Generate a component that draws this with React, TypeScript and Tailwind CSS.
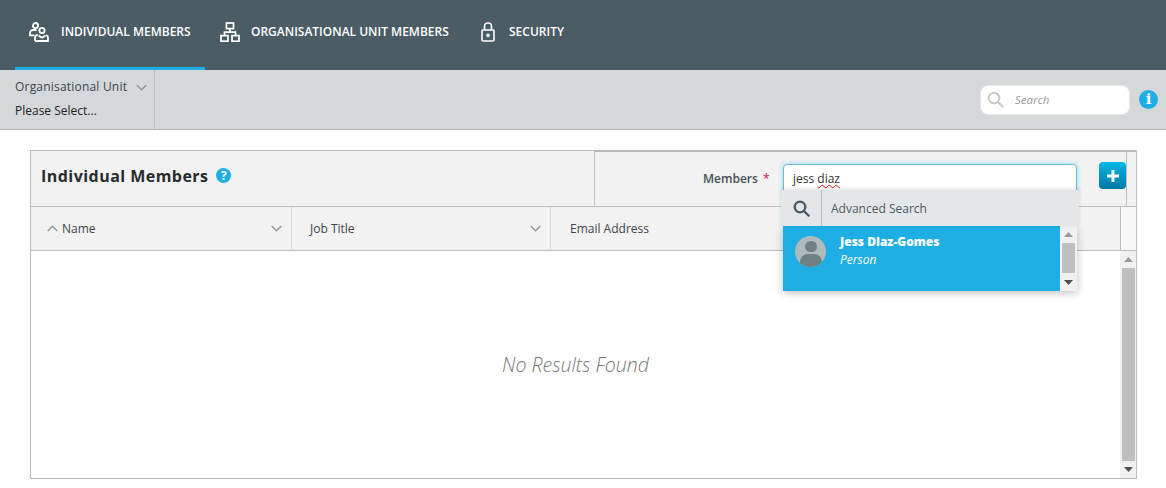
import React from "react";

const Chevron = ({ up = false, className = "" }: { up?: boolean; className?: string }) => (
  <svg width="11" height="7" viewBox="0 0 11 7" fill="none" stroke="#8d9599" strokeWidth="1.3" className={className}>
    <path d={up ? "M.7 6 5.5 1.2 10.3 6" : "M.7 1 5.5 5.8 10.3 1"} />
  </svg>
);

const MembersIcon = () => (
  <svg width="20" height="20" viewBox="0 0 20 20" fill="none" stroke="#fff" strokeWidth="1.8">
    <circle cx="6.5" cy="3.6" r="2.6" />
    <path d="M5.4 13.4H1v-2c0-2 1.4-3.4 3.2-3.4h3.4" />
    <circle cx="13" cy="8.4" r="2.6" />
    <path d="M6 19v-3.4c0-1.6 1.2-2.6 2.8-2.6M17.2 13c1.2.4 1.8 1.4 1.8 2.6V19H6" />
    <path d="M9.5 13.6 13 15.6l3.5-2" />
  </svg>
);

const OrgIcon = () => (
  <svg width="20" height="20" viewBox="0 0 20 20" fill="none" stroke="#fff" strokeWidth="1.7">
    <rect x="6.5" y="1" width="7" height="5.6" />
    <rect x="1" y="13.6" width="7" height="5.6" />
    <rect x="12" y="13.6" width="7" height="5.6" />
    <path d="M10 6.6v3.6M4.5 13.6v-3.4h11v3.4" />
  </svg>
);

const LockIcon = () => (
  <svg width="14" height="20" viewBox="0 0 14 20" fill="none" stroke="#fff" strokeWidth="1.6">
    <path d="M3.5 8V4c0-1.8 1.3-3 3.5-3s3.5 1.2 3.5 3v4" />
    <rect x="1" y="8" width="12" height="11" rx="1" />
    <circle cx="7" cy="13.4" r="1.8" fill="#fff" stroke="none" />
  </svg>
);

const SearchGlass = ({ color, size, width }: { color: string; size: number; width: number }) => (
  <svg width={size} height={size} viewBox="0 0 16 16" fill="none" stroke={color} strokeWidth={width} strokeLinecap="round">
    <circle cx="6.6" cy="6.6" r="5" />
    <path d="M10.4 10.4 14.8 14.8" />
  </svg>
);

const ScrollArrow = ({ up = false }: { up?: boolean }) => (
  <svg width="9" height="5" viewBox="0 0 9 5" fill={up ? "#9a9a9a" : "#505050"}>
    <path d={up ? "M4.5 0 9 5H0z" : "M0 0h9L4.5 5z"} />
  </svg>
);

const Tab = ({ icon, label, active = false, className = "" }: { icon: React.ReactNode; label: string; active?: boolean; className?: string }) => (
  <div className={`flex h-[70px] items-center pl-[14px] pb-[3px] border-b-[3px] ${active ? "border-[#1eaee4]" : "border-transparent"} ${className}`}>
    {icon}
    <span className="whitespace-nowrap text-[12px] font-semibold uppercase text-white">{label}</span>
  </div>
);

export default function App() {
  return (
    <div className="h-[488px] w-[1166px] overflow-hidden bg-white font-['Open_Sans',sans-serif]">
      <nav className="flex h-[70px] bg-[#4b5c64] pl-[15px]">
        <Tab active className="w-[190px]" icon={<span className="mr-[12px] flex shrink-0"><MembersIcon /></span>} label="Individual Members" />
        <Tab className="w-[259px]" icon={<span className="ml-[1px] mr-[11px] flex shrink-0"><OrgIcon /></span>} label="Organisational Unit Members" />
        <Tab icon={<span className="ml-[3px] mr-[14px] flex shrink-0"><LockIcon /></span>} label="Security" />
      </nav>

      <div className="flex h-[60px] items-stretch justify-between border-b border-[#b9bbbd] bg-[#d5d8db]">
        <div className="w-[155px] border-r border-[#b9bcbf] pl-[15px] pr-[7px] pt-[8px]">
          <div className="flex h-[18px] items-center justify-between text-[12px] tracking-[0.2px] text-[#3a454b]">
            Organisational Unit
            <Chevron />
          </div>
          <div className="mt-[6px] text-[12px] leading-[18px] text-[#222]">Please Select...</div>
        </div>
        <div className="flex items-center pr-[8px]">
          <div className="flex h-[30px] w-[150px] items-center rounded-[8px] border border-[#e4e6e8] bg-white pl-[6px]">
            <SearchGlass color="#c9c9c9" size={17} width={1.8} />
            <span className="ml-[11px] text-[11.5px] italic text-[#9a9a9a]">Search</span>
          </div>
          <div className="ml-[9px] flex h-[19px] w-[19px] items-center justify-center rounded-full bg-[#1eaee4] font-['DejaVu_Serif',serif] text-[15px] font-bold text-white">
            i
          </div>
        </div>
      </div>

      <div className="relative mx-[30px] mt-[20px] h-[329px] w-[1107px] border border-[#bbb]">
        <div className="flex h-[56px] border-b border-[#bdbdbd] bg-[#f2f2f2]">
          <div className="flex flex-1 items-center pb-[6px] pl-[10px]">
            <h1 className="text-[16px] font-bold tracking-[0.46px] text-[#262b2e]">Individual Members</h1>
            <span className="ml-[8px] flex h-[15px] w-[15px] items-center justify-center rounded-full bg-[#1eaee4] text-[12px] font-bold text-white">?</span>
          </div>
          <div className="flex w-[542px] border-l border-[#c4c4c4] border-t border-t-[#bbb]">
            <div className="flex flex-1 pt-[12px]">
              <label className="ml-[108px] w-[80px] pt-[5px] text-[12px] font-semibold leading-[20px] text-[#444f55]">
                Members <span className="ml-[2px] text-[#d8347c]">*</span>
              </label>
              <div className="h-[30px] w-[294px] rounded-[4px] border border-[#6fbcd3] bg-white pl-[9px] text-[12px] leading-[28px] text-[#333] shadow-[0_0_5px_#8fd8ef]">
                jess <span className="underline decoration-wavy decoration-[#d22] decoration-1">diaz</span>
              </div>
              <div className="ml-[22px] mt-[-2px] flex h-[27px] w-[27px] items-center justify-center rounded-[4px] bg-gradient-to-b from-[#00b9e6] to-[#0079a3]">
                <svg width="12" height="12" viewBox="0 0 12 12" fill="#fff">
                  <path d="M4.5 0h3v4.5H12v3H7.5V12h-3V7.5H0v-3h4.5z" />
                </svg>
              </div>
            </div>
            <div className="w-[11px] border-l border-[#bdbdbd]" />
          </div>
        </div>

        <div className="flex h-[44px] border-b border-[#bdbdbd] bg-[#f2f2f2] text-[12px] text-[#3c464b]">
          <div className="flex w-[261px] items-center border-r border-[#d9d9d9] pl-[16px] pr-[9px]">
            <Chevron up />
            <span className="ml-[4px] flex-1">Name</span>
            <Chevron />
          </div>
          <div className="flex w-[259px] items-center border-r border-[#d9d9d9] pl-[18px] pr-[9px]">
            <span className="flex-1">Job Title</span>
            <Chevron />
          </div>
          <div className="flex flex-1 items-center pl-[19px]">Email Address</div>
          <div className="w-[16px] border-l border-[#bdbdbd] bg-[#f7f7f7]" />
        </div>

        <div className="flex h-[227px]">
          <div className="flex flex-1 items-center justify-center text-[19.5px] font-light italic text-[#777]">
            No Results Found
          </div>
          <div className="flex w-[16px] flex-col items-center bg-[#f1f1f1]">
            <div className="flex h-[17px] items-center justify-center"><ScrollArrow up /></div>
            <div className="w-[13px] flex-1 bg-[#bfbfbf]" />
            <div className="flex h-[17px] items-center justify-center"><ScrollArrow /></div>
          </div>
        </div>

        {/* autocomplete dropdown sits over the table */}
        <div className="absolute left-[750px] top-[39px] w-[298px]">
          <div className="ml-[2px] mt-[36px] flex h-[65px] w-[294px] shadow-[0_2px_8px_rgba(0,0,0,0.25)]">
            <div className="flex flex-1 bg-[#1eaee4] pl-[12px] pt-[10px] text-white">
              <div className="flex h-[31px] w-[31px] flex-col items-center overflow-hidden rounded-full bg-[#aebbbd]">
                <div className="mt-[5px] h-[12px] w-[12px] rounded-full bg-[#6f8083]" />
                <div className="mt-[2px] h-[14px] w-[22px] rounded-t-[8px] bg-[#6f8083]" />
              </div>
              <div className="ml-[14px]">
                <div className="mt-[-3px] text-[12px] font-extrabold leading-[18px]">Jess Diaz-Gomes</div>
                <div className="text-[12px] italic leading-[18px]">Person</div>
              </div>
            </div>
            <div className="flex w-[17px] flex-col items-center bg-[#f1f1f1]">
              <div className="flex h-[17px] items-center justify-center"><ScrollArrow up /></div>
              <div className="h-[30px] w-[13px] bg-[#bfbfbf]" />
              <div className="flex flex-1 items-center justify-center"><ScrollArrow /></div>
            </div>
          </div>
          <div className="absolute left-0 top-0 flex h-[36px] w-[298px] bg-[#e3e7ea] shadow-[0_-1px_4px_rgba(0,0,0,0.12)]">
            <div className="flex w-[41px] items-center justify-center border-r border-[#b9bdc0]">
              <SearchGlass color="#4b5c64" size={17} width={2.2} />
            </div>
            <div className="flex items-center pl-[9px] pt-[2px] text-[12px] text-[#4e5a60]">Advanced Search</div>
          </div>
        </div>
      </div>
    </div>
  );
}
